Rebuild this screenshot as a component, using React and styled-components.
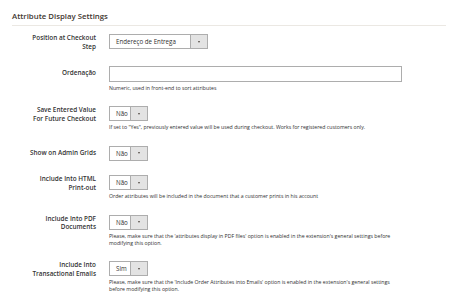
import React from "react";
import styled, { createGlobalStyle } from "styled-components";

const GlobalStyle = createGlobalStyle`
  body {
    margin: 0;
    background: #ffffff;
    font-family: "Open Sans", "Liberation Sans", sans-serif;
    color: #303030;
  }
`;

const Section = styled.div`
  padding: 10px 4px 0 12px;
`;

const Title = styled.div`
  font-size: 7.8px;
  font-weight: 600;
  color: #41362f;
  line-height: 12px;
  padding-bottom: 3px;
  border-bottom: 1px solid #ebe8e3;
  margin-bottom: 8px;
`;

const Fieldset = styled.div`
  display: flex;
  flex-direction: column;
  gap: 14.5px;
`;

const Row = styled.div`
  display: grid;
  grid-template-columns: 84px 293px;
  column-gap: 13px;
  align-items: start;
`;

const Label = styled.div`
  text-align: right;
  font-size: 6.4px;
  font-weight: 600;
  line-height: 8.5px;
  color: #333333;
  padding-top: ${(props) => (props.single ? "3px" : "0")};
`;

const Control = styled.div`
  display: flex;
  flex-direction: column;
  align-items: flex-start;
`;

const SelectBox = styled.div`
  display: flex;
  width: ${(props) => props.width}px;
  height: 15px;
  box-sizing: border-box;
  border: 1px solid #adadad;
  background: #ffffff;
`;

const SelectValue = styled.div`
  flex: 1;
  font-size: 6.2px;
  line-height: 13px;
  padding-left: 6px;
  color: #303030;
`;

const SelectButton = styled.div`
  width: 16px;
  border-left: 1px solid #adadad;
  background: #e3e3e3;
  display: flex;
  align-items: center;
  justify-content: center;
`;

const Arrow = styled.div`
  width: 0;
  height: 0;
  border-left: 1.5px solid transparent;
  border-right: 1.5px solid transparent;
  border-top: 2px solid #514943;
`;

const TextInput = styled.div`
  width: 293px;
  height: 16px;
  box-sizing: border-box;
  border: 1px solid #adadad;
  background: #ffffff;
`;

const Note = styled.div`
  margin-top: 3px;
  font-size: 5.2px;
  line-height: 7px;
  color: #303030;
`;

const Select = ({ value, width }) => (
  <SelectBox width={width}>
    <SelectValue>{value}</SelectValue>
    <SelectButton>
      <Arrow />
    </SelectButton>
  </SelectBox>
);

const fields = [
  {
    label: ["Position at Checkout", "Step"],
    select: "Endereço de Entrega",
    width: 99,
  },
  {
    label: ["Ordenação"],
    input: true,
    note: "Numeric, used in front-end to sort attributes",
  },
  {
    label: ["Save Entered Value", "For Future Checkout"],
    select: "Não",
    width: 39,
    note: "If set to \"Yes\", previously entered value will be used during checkout. Works for registered customers only.",
  },
  {
    label: ["Show on Admin Grids"],
    select: "Não",
    width: 39,
  },
  {
    label: ["Include Into HTML", "Print-out"],
    select: "Não",
    width: 39,
    note: "Order attributes will be included in the document that a customer prints in his account",
  },
  {
    label: ["Include Into PDF", "Documents"],
    select: "Não",
    width: 39,
    note: "Please, make sure that the 'attributes display in PDF files' option is enabled in the extension's general settings before modifying this option.",
  },
  {
    label: ["Include Into", "Transactional Emails"],
    select: "Sim",
    width: 39,
    note: "Please, make sure that the 'Include Order Attributes into Emails' option is enabled in the extension's general settings before modifying this option.",
  },
];

const App = () => {
  return (
    <>
      <GlobalStyle />
      <Section>
        <Title>Attribute Display Settings</Title>
        <Fieldset>
          {fields.map((field, index) => (
            <Row key={index}>
              <Label single={field.label.length === 1}>
                {field.label.map((line, i) => (
                  <div key={i}>{line}</div>
                ))}
              </Label>
              <Control>
                {field.input ? (
                  <TextInput />
                ) : (
                  <Select value={field.select} width={field.width} />
                )}
                {field.note && <Note>{field.note}</Note>}
              </Control>
            </Row>
          ))}
        </Fieldset>
      </Section>
    </>
  );
};

export default App;
